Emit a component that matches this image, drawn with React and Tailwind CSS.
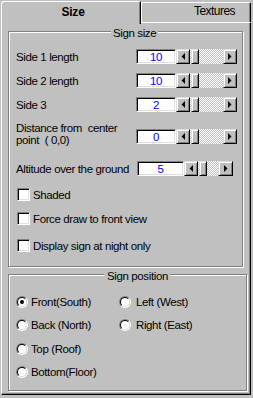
import React from "react";

function Arrow({ dir }) {
  return (
    <svg width="4" height="7" viewBox="0 0 4 7" className="block">
      {dir === "left" ? (
        <polygon points="4,0 4,7 0.5,3.5" fill="#000" />
      ) : (
        <polygon points="0,0 0,7 3.5,3.5" fill="#000" />
      )}
    </svg>
  );
}

function Btn({ w, children }) {
  return (
    <div
      className="h-full shrink-0 flex items-center justify-center bg-[#c0c0c0] border border-t-[#dfdfdf] border-l-[#dfdfdf] border-r-black border-b-black shadow-[inset_1px_1px_#ffffff,inset_-1px_-1px_#808080]"
      style={{ width: w }}
    >
      {children}
    </div>
  );
}

function Scroll({ trackBefore, trackAfter, rightW }) {
  return (
    <div className="flex h-[15px]">
      <Btn w={14}>
        <Arrow dir="left" />
      </Btn>
      <div
        className="h-full bg-[image:repeating-conic-gradient(#c0c0c0_0_25%,#ffffff_0_50%)] bg-[length:2px_2px]"
        style={{ width: trackBefore }}
      />
      <Btn w={8} />
      <div
        className="h-full bg-[image:repeating-conic-gradient(#c0c0c0_0_25%,#ffffff_0_50%)] bg-[length:2px_2px]"
        style={{ width: trackAfter }}
      />
      <Btn w={rightW}>
        <Arrow dir="right" />
      </Btn>
    </div>
  );
}

function Input({ value, w }) {
  return (
    <div
      className="h-[15px] shrink-0 bg-white border border-t-[#808080] border-l-[#808080] border-r-white border-b-white shadow-[inset_1px_1px_#000000,inset_-1px_-1px_#dfdfdf] flex items-center justify-center text-[#0000ff] text-[11.5px] leading-[12px]"
      style={{ width: w }}
    >
      {value}
    </div>
  );
}

function Check({ label, className }) {
  return (
    <div className={"flex items-center h-[13px] " + className}>
      <div className="w-[13px] h-[13px] ml-px bg-white border border-t-[#808080] border-l-[#808080] border-r-white border-b-white shadow-[inset_1px_1px_#000000,inset_-1px_-1px_#dfdfdf]" />
      <span className="ml-[3px]">{label}</span>
    </div>
  );
}

function Radio({ label, checked, gap }) {
  return (
    <div className="flex items-center h-[12px]">
      <div className="w-[12px] h-[12px] rounded-full border border-t-[#808080] border-l-[#808080] border-r-white border-b-white">
        <div className="w-full h-full rounded-full bg-white border border-t-black border-l-black border-r-[#dfdfdf] border-b-[#dfdfdf] flex items-center justify-center">
          {checked && <div className="w-[4px] h-[4px] rounded-full bg-black" />}
        </div>
      </div>
      <span className={gap}>{label}</span>
    </div>
  );
}

export default function App() {
  return (
    <div className="w-[253px] h-[398px] bg-[#c0c0c0] pl-px overflow-hidden font-['Liberation_Sans',Arial,sans-serif] text-[11.5px] leading-[12px] tracking-[-0.38px] text-black">
      <div className="w-[250px]">
        {/* tabs */}
        <div className="flex h-[22px]">
          <div className="relative z-10 w-[140px] h-[23px] mt-px bg-[#c0c0c0] border-l border-t border-l-white border-t-white border-r border-r-black rounded-tl-[3px] shadow-[inset_-1px_0_#808080] pt-[3px] pl-[4px] text-center text-[12px] leading-[14px] font-bold tracking-[-0.2px]">
            Size
          </div>
          <div className="flex-1 h-[20px] mt-[2px] border-l border-t border-l-white border-t-white border-r border-r-black rounded-tr-[2px] shadow-[inset_-1px_0_#808080] pt-[2px] pl-[52px] text-[12px] tracking-[-0.55px]">
            Textures
          </div>
        </div>
        {/* body */}
        <div className="h-[373px] border border-t-white border-l-white border-r-black border-b-black shadow-[inset_-1px_-1px_#808080] pt-[8px] pl-[6px]">
          {/* Sign size group */}
          <div className="relative w-[235px] h-[236px] border border-[#808080] shadow-[inset_1px_1px_#ffffff,1px_1px_0_#ffffff] pl-[7px]">
            <div className="absolute -top-[5px] left-[102px] bg-[#c0c0c0] px-[2px]">
              Sign size
            </div>
            <div className="flex items-center h-[15px] mt-[17px]">
              <div className="w-[120px]">Side 1 length</div>
              <Input value="10" w={40} />
              <Scroll trackBefore={1} trackAfter={24} rightW={14} />
            </div>
            <div className="flex items-center h-[15px] mt-[9px]">
              <div className="w-[120px]">Side 2 length</div>
              <Input value="10" w={40} />
              <Scroll trackBefore={1} trackAfter={24} rightW={14} />
            </div>
            <div className="flex items-center h-[15px] mt-[9px]">
              <div className="w-[120px]">Side 3</div>
              <Input value="2" w={40} />
              <Scroll trackBefore={1} trackAfter={24} rightW={14} />
            </div>
            <div className="flex items-start h-[15px] mt-[17px]">
              <div className="w-[120px] -mt-[7px] whitespace-pre">
                {"Distance from  center\npoint  ( 0,0)"}
              </div>
              <Input value="0" w={40} />
              <Scroll trackBefore={1} trackAfter={24} rightW={14} />
            </div>
            <div className="flex items-center h-[15px] mt-[17px]">
              <div className="w-[121px] whitespace-nowrap">Altitude over the ground</div>
              <Input value="5" w={47} />
              <Scroll trackBefore={1} trackAfter={11} rightW={15} />
            </div>
            <Check label="Shaded" className="mt-[12px]" />
            <Check label="Force draw to front view" className="mt-[11px]" />
            <Check label="Display sign at night only" className="mt-[14px]" />
          </div>
          {/* Sign position group */}
          <div className="relative w-[239px] h-[117px] mt-[7px] border border-[#808080] shadow-[inset_1px_1px_#ffffff,1px_1px_0_#ffffff] pl-[7px]">
            <div className="absolute -top-[5px] left-[95px] bg-[#c0c0c0] pl-[3px] pr-[2px]">
              Sign position
            </div>
            <div className="flex mt-[21px]">
              <div className="w-[103px]">
                <Radio label="Front(South)" checked gap="ml-[3px]" />
              </div>
              <Radio label="Left (West)" gap="ml-[5px]" />
            </div>
            <div className="flex mt-[11px]">
              <div className="w-[103px]">
                <Radio label="Back (North)" gap="ml-[3px]" />
              </div>
              <Radio label="Right (East)" gap="ml-[5px]" />
            </div>
            <div className="mt-[12px]">
              <Radio label="Top (Roof)" gap="ml-[3px]" />
            </div>
            <div className="mt-[11px]">
              <Radio label="Bottom(Floor)" gap="ml-[3px]" />
            </div>
          </div>
        </div>
      </div>
    </div>
  );
}
